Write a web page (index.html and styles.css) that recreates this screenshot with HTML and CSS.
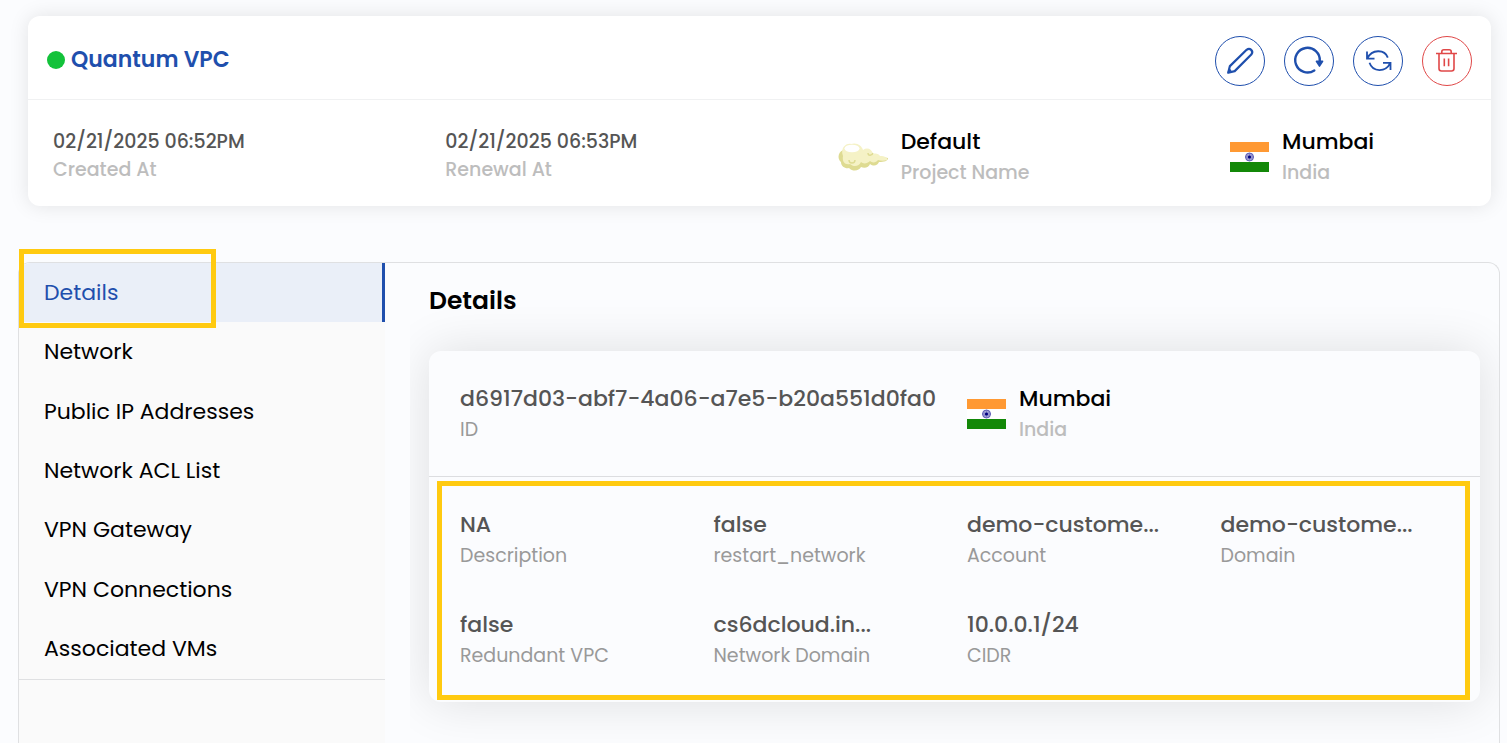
FILE: index.html
```html
<!DOCTYPE html>
<html lang="en">
<head>
<meta charset="utf-8">
<meta name="viewport" content="width=device-width, initial-scale=1">
<title>Quantum VPC</title>
<link rel="stylesheet" href="styles.css">
</head>
<body>
<svg class="defs" width="0" height="0" aria-hidden="true">
  <symbol id="flag-india" viewBox="0 0 39 30">
    <rect width="39" height="30" fill="#fff"/>
    <rect width="39" height="10" fill="#ff9933"/>
    <rect y="20" width="39" height="10" fill="#138808"/>
    <circle cx="19.500" cy="15" r="4" fill="#a5a5d8" stroke="#5a5ab5" stroke-width="1"/>
    <path d="M19.500 11v8M15.500 15h8M16.700 12.200l5.600 5.600M22.300 12.200l-5.600 5.600" stroke="#6a6abb" stroke-width=".6"/>
    <circle cx="19.500" cy="15" r="1.600" fill="#000080"/>
  </symbol>
</svg>

<header class="summary">
  <div class="summary-head">
    <h1 class="title"><span class="status"></span>Quantum VPC</h1>
    <div class="actions">
      <button class="action" type="button" aria-label="Edit">
        <svg width="50" height="50" viewBox="0 0 50 50" fill="none" stroke="currentColor" stroke-width="2.200" stroke-linejoin="round"><path d="M13.200 36.700l1.700-6.600L31.600 13.800c3.300-2.700 7.400 1.300 4.700 4.700L19.700 35.100z"/><path d="M13.200 36.700l2.600-3" stroke-width="2"/></svg>
      </button>
      <button class="action" type="button" aria-label="Restart">
        <svg width="50" height="50" viewBox="0 0 50 50" fill="none" stroke="currentColor" stroke-width="2.400" stroke-linecap="round"><path d="M30.300 34.400A12.300 12.300 0 1 1 35.800 25"/><path d="M32.400 25.300h6.200l-3.100 4.800z" fill="currentColor" stroke-width="1.500" stroke-linejoin="round"/></svg>
      </button>
      <button class="action" type="button" aria-label="Refresh">
        <svg width="50" height="50" viewBox="0 0 50 50" fill="none" stroke="currentColor" stroke-width="1.800"><path d="M14 15.500v7.200h7.500M14.300 22.400c4.500-9.300 17.300-9.500 20.500-.8M37.500 34v-7.200H30M37.200 27.100c-4.500 9.300-17.500 9.300-20.700-.3"/></svg>
      </button>
      <button class="action danger" type="button" aria-label="Delete">
        <svg width="50" height="50" viewBox="0 0 50 50" fill="none" stroke="currentColor" stroke-width="1.600"><path d="M14 17.500h21M17 18v14.500q0 2.500 2.500 2.500h10q2.500 0 2.500-2.500V18M19.800 17v-1.300q0-2 2-2h5.400q2 0 2 2V17M22.300 22.500v7.700M26.600 22.500v7.700"/></svg>
      </button>
    </div>
  </div>
  <div class="summary-body">
    <div class="stamp"><strong>02/21/2025 06:52PM</strong><span>Created At</span></div>
    <div class="stamp"><strong>02/21/2025 06:53PM</strong><span>Renewal At</span></div>
    <div class="place">
      <svg class="cloud" width="50" height="30" viewBox="0 0 50 30" aria-hidden="true">
        <path d="M5 8C0 10-1 17 3 20c0 5 5 7 8 6 4 4 10 3 12-1 4 2 8 0 9-3 4 3 8 1 9-2 5 0 9-1 9-4z" fill="#dedb92"/>
        <path d="M5 14C2 6 8 1 13 2c6-2 11 2 12 6 4-3 9-1 10 4 3-1 6 0 7 2 5 0 8 2 7 4-3 1-6 1-9 0-2 3-6 3-8 1-3 3-7 3-9 1-2 5-8 5-11 2-5 1-8-2-7-8z" fill="#f5f2c6"/>
        <ellipse cx="14" cy="6.500" rx="7.500" ry="3.800" fill="#fff"/>
        <path d="M11 18c0 4 6 4 6 0M30 11c0 3 4 3 5 0" fill="none" stroke="#dedb92" stroke-width="1.400"/>
      </svg>
      <div class="place-text"><strong>Default</strong><span>Project Name</span></div>
    </div>
    <div class="place">
      <svg class="flag" width="39" height="30" role="img" aria-label="Flag of India"><use href="#flag-india"/></svg>
      <div class="place-text"><strong>Mumbai</strong><span>India</span></div>
    </div>
  </div>
</header>

<div class="panel">
  <nav class="sidebar">
    <div class="tabs">
      <a class="tab active" href="#details">Details</a>
      <a class="tab" href="#network">Network</a>
      <a class="tab" href="#ip">Public IP Addresses</a>
      <a class="tab" href="#acl">Network ACL List</a>
      <a class="tab" href="#gateway">VPN Gateway</a>
      <a class="tab" href="#connections">VPN Connections</a>
      <a class="tab" href="#vms">Associated VMs</a>
    </div>
    <div class="mark mark-tab"></div>
  </nav>
  <main class="content" id="details">
    <h2 class="heading">Details</h2>
    <section class="card">
      <div class="grid top">
        <div class="field wide"><strong>d6917d03-abf7-4a06-a7e5-b20a551d0fa0</strong><span>ID</span></div>
        <div class="place wide">
          <svg class="flag" width="39" height="30" role="img" aria-label="Flag of India"><use href="#flag-india"/></svg>
          <div class="place-text"><strong>Mumbai</strong><span>India</span></div>
        </div>
      </div>
      <div class="grid bottom">
        <div class="field"><strong>NA</strong><span>Description</span></div>
        <div class="field"><strong>false</strong><span>restart_network</span></div>
        <div class="field"><strong>demo-custome...</strong><span>Account</span></div>
        <div class="field"><strong>demo-custome...</strong><span>Domain</span></div>
        <div class="field"><strong>false</strong><span>Redundant VPC</span></div>
        <div class="field"><strong>cs6dcloud.in...</strong><span>Network Domain</span></div>
        <div class="field"><strong>10.0.0.1/24</strong><span>CIDR</span></div>
        <div class="mark mark-fields"></div>
      </div>
    </section>
  </main>
</div>
</body>
</html>
```

FILE: styles.css
```css
* { box-sizing: border-box; }

body {
  margin: 0;
  min-height: 100vh;
  padding: 16px 7px 0 18px;
  display: flex;
  flex-direction: column;
  gap: 56px;
  background: #fbfcfe;
  color: #000;
  font-family: Poppins, Inter, "Open Sans", sans-serif;
}

h1, h2 { margin: 0; }
strong { font-weight: 500; }
.defs { position: absolute; }

.summary {
  margin: 0 9px 0 10px;
  border-radius: 12px;
  background: #fff;
  box-shadow: 0 0 20px rgba(0, 0, 0, 0.1);
}

.summary-head {
  display: flex;
  align-items: center;
  justify-content: space-between;
  height: 84px;
  padding: 6px 19px 0;
  border-bottom: 1px solid #f0f1f2;
}

.title {
  display: flex;
  align-items: center;
  gap: 6px;
  padding-bottom: 2px;
  color: #1f4fad;
  font-size: 22px;
  font-weight: 600;
  line-height: 32px;
}

.status {
  width: 18px;
  height: 18px;
  border-radius: 50%;
  background: #13c23a;
}

.actions { display: flex; gap: 19px; }

.action {
  width: 50px;
  height: 50px;
  padding: 0;
  border: 1px solid currentColor;
  border-radius: 50%;
  background: none;
  color: #1f4fad;
}

.action svg { display: block; margin: -1px; }
.danger { color: #e04848; }

.summary-body {
  display: grid;
  grid-template-columns: repeat(3, 1fr) 236px;
  padding: 26px 25px 18px;
}

.stamp {
  display: flex;
  flex-direction: column;
  justify-content: center;
  padding-bottom: 2px;
  font-size: 19px;
  line-height: 28px;
}

.stamp strong { color: #555; }
.stamp span { color: #bdbdbd; font-weight: 500; }

.place { display: flex; align-items: center; gap: 13px; }
.cloud { flex: none; }
.flag { flex: none; }
.place-text { display: flex; flex-direction: column; line-height: 31px; }
.place-text strong { font-size: 22px; }
.place-text span { color: #bdbdbd; font-size: 19px; font-weight: 500; }

.panel {
  flex: 1;
  display: flex;
  border: 1px solid #dfe0e2;
  border-bottom: 0;
  border-radius: 12px 12px 0 0;
}

.sidebar {
  position: relative;
  flex: 0 0 366px;
  border-radius: 12px 0 0 0;
  background: #fafafa;
}

.tabs {
  display: grid;
  grid-auto-rows: 1fr;
  height: 417px;
  border-bottom: 1px solid #dfe0e2;
}

.tab {
  display: flex;
  align-items: center;
  padding: 0 25px 1px;
  color: #000;
  font-size: 22px;
  text-decoration: none;
}

.tab.active {
  border-right: 3px solid #1f4fad;
  border-radius: 12px 0 0 0;
  background: #eaeff8;
  color: #1f4fad;
}

.mark {
  position: absolute;
  border: 5px solid #ffca10;
  pointer-events: none;
}

.mark-tab { top: -14px; left: 0; width: 197px; height: 79px; }
.mark-fields { top: 4px; right: 10px; bottom: 2px; left: 8px; }

.content {
  flex: 1;
  min-width: 0;
  margin-left: 25px;
  padding: 20px 19px 41px;
  overflow: hidden;
}

.heading { font-size: 25px; font-weight: 600; line-height: 36px; }

.card {
  margin-top: 32px;
  border-radius: 12px;
  background: #fbfcfe;
  box-shadow: 0 0 50px rgba(0, 0, 0, 0.12);
}

.grid { display: grid; grid-template-columns: repeat(4, 1fr); }
.top { padding: 32px 6px 31px 31px; border-bottom: 1px solid #dcdde0; }
.bottom { position: relative; row-gap: 38px; padding: 32px 6px 31px 31px; }
.wide { grid-column: span 2; }

.field { display: flex; flex-direction: column; min-width: 0; line-height: 31px; }
.field strong { color: #555; font-size: 22px; }
.field span { color: #999; font-size: 19px; }
```
